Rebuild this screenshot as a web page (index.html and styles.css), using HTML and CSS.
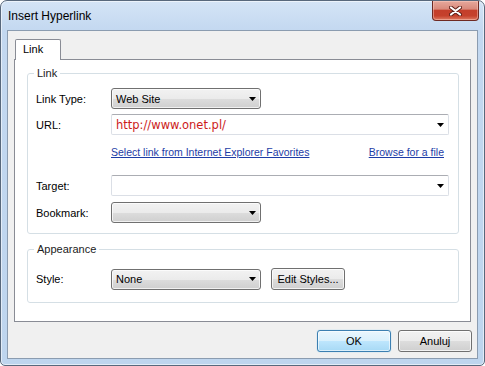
FILE: index.html
```html
<!DOCTYPE html>
<html lang="en">
<head>
    <meta charset="UTF-8">
    <title>Insert Hyperlink</title>
    <link rel="stylesheet" href="styles.css">
</head>
<body>
    <div class="window">
        <div class="titlebar">
            <span class="title">Insert Hyperlink</span>
            <button type="button" class="close" aria-label="Close">
                <svg width="13" height="10" viewBox="0 0 13 10">
                    <path d="M2 1.5 L11 8.5 M11 1.5 L2 8.5" stroke="#5e1f18" stroke-width="4" stroke-linecap="round"/>
                    <path d="M2 1.5 L11 8.5 M11 1.5 L2 8.5" stroke="#fff" stroke-width="2.2" stroke-linecap="round"/>
                </svg>
            </button>
        </div>
        <div class="client">
            <div class="tabs">
                <div class="tab active">Link</div>
            </div>
            <div class="tab-panel">
                <fieldset class="group group-link">
                    <legend>Link</legend>
                    <div class="row">
                        <label>Link Type:</label>
                        <div class="combo list short">
                            <span>Web Site</span>
                            <svg class="arrow" width="7" height="4" viewBox="0 0 7 4"><path d="M0 0h7L3.5 4z"/></svg>
                        </div>
                    </div>
                    <div class="row row-url">
                        <label>URL:</label>
                        <div class="combo edit wide">
                            <span class="url">http://www.onet.pl/</span>
                            <svg class="arrow" width="7" height="4" viewBox="0 0 7 4"><path d="M0 0h7L3.5 4z"/></svg>
                        </div>
                    </div>
                    <div class="links">
                        <a href="#">Select link from Internet Explorer Favorites</a>
                        <a href="#" class="browse">Browse for a file</a>
                    </div>
                    <div class="row row-target">
                        <label>Target:</label>
                        <div class="combo edit wide">
                            <span></span>
                            <svg class="arrow" width="7" height="4" viewBox="0 0 7 4"><path d="M0 0h7L3.5 4z"/></svg>
                        </div>
                    </div>
                    <div class="row row-bookmark">
                        <label>Bookmark:</label>
                        <div class="combo list short">
                            <span></span>
                            <svg class="arrow" width="7" height="4" viewBox="0 0 7 4"><path d="M0 0h7L3.5 4z"/></svg>
                        </div>
                    </div>
                </fieldset>
                <fieldset class="group group-appearance">
                    <legend>Appearance</legend>
                    <div class="row row-style">
                        <label>Style:</label>
                        <div class="combo list short">
                            <span>None</span>
                            <svg class="arrow" width="7" height="4" viewBox="0 0 7 4"><path d="M0 0h7L3.5 4z"/></svg>
                        </div>
                        <button type="button" class="btn edit-styles">Edit Styles...</button>
                    </div>
                </fieldset>
            </div>
            <div class="footer">
                <button type="button" class="btn default">OK</button>
                <button type="button" class="btn">Anuluj</button>
            </div>
        </div>
    </div>
</body>
</html>
```

FILE: styles.css
```css
body {
    margin: 0;
    background: #fff;
    font-family: "Liberation Sans", Arial, sans-serif;
    font-size: 11px;
    color: #000;
}
.window {
    width: 485px;
    height: 366px;
    box-sizing: border-box;
    border: 1px solid #58687c;
    border-radius: 7px 7px 5px 5px;
    padding: 0 6px 6px;
    background: linear-gradient(180deg, #d4e4f6 0%, #c3d8f0 30px, #bed5ee 100%);
    box-shadow: inset 0 0 0 1px rgba(255, 255, 255, 0.55);
    display: flex;
    flex-direction: column;
    overflow: hidden;
}
.titlebar {
    display: flex;
    align-items: center;
    height: 29px;
    margin: 0 -6px;
    padding: 0 5px 0 7px;
}
.title {
    font-size: 12px;
    color: #000;
}
.close {
    margin-left: auto;
    align-self: flex-start;
    width: 47px;
    height: 20px;
    padding: 0;
    border: 1px solid #6e2a23;
    border-top: none;
    border-radius: 0 0 4px 4px;
    background: linear-gradient(180deg, #e6a89c 0%, #d98a7c 42%, #c43f2b 50%, #c5412c 78%, #de7a62 100%);
    box-shadow: inset 0 0 0 1px rgba(255, 210, 200, 0.45);
    display: flex;
    align-items: center;
    justify-content: center;
}
.client {
    flex: 1;
    display: flex;
    flex-direction: column;
    background: #f0f0f0;
    border: 1px solid #8b9cb0;
    padding: 8px 6px 0;
}
.tabs {
    display: flex;
    height: 20px;
    padding-left: 1px;
}
.tab {
    box-sizing: border-box;
    width: 46px;
    height: 21px;
    padding: 3px 0 0 7px;
    border: 1px solid #898c95;
    border-bottom: none;
    border-radius: 2px 2px 0 0;
    background: #fff;
    line-height: 13px;
    position: relative;
    z-index: 1;
}
.tab-panel {
    box-sizing: border-box;
    height: 263px;
    border: 1px solid #898c95;
    background: #fff;
    padding-top: 7px;
}
.group {
    margin: 0 11px 0 12px;
    padding: 8px 9px 10px 8px;
    border: 1px solid #d5dfe5;
    border-radius: 3px;
    min-width: 0;
}
.group legend {
    padding: 0 3px;
    margin-left: -2px;
    line-height: 13px;
    color: #1b1b1b;
}
.group-appearance {
    margin-top: 9px;
    padding: 12px 9px 12px 8px;
}
.row {
    display: flex;
    align-items: center;
}
.row label {
    width: 75px;
    flex-shrink: 0;
}
.row-url {
    margin-top: 5px;
}
.row-target {
    margin-top: 16px;
}
.row-bookmark {
    margin-top: 6px;
}
.row-style {
    height: 22px;
}
.combo {
    box-sizing: border-box;
    height: 21px;
    display: flex;
    align-items: center;
    padding: 0 4px;
}
.combo span {
    flex: 1;
}
.combo.list {
    border: 1px solid #707070;
    border-radius: 3px;
    background: linear-gradient(180deg, #f2f2f2 0%, #ebebeb 50%, #dddddd 50%, #cfcfcf 100%);
    box-shadow: inset 0 0 0 1px rgba(255, 255, 255, 0.7);
}
.combo.edit {
    background: #fff;
    border: 1px solid #dbdfe6;
    border-top-color: #abadb3;
    border-radius: 2px;
}
.short {
    width: 150px;
}
.wide {
    flex: 1;
}
.url {
    font-family: "DejaVu Sans", Tahoma, sans-serif;
    font-size: 11.5px;
    color: #cc1b1b;
}
.arrow {
    fill: #000;
    flex-shrink: 0;
}
.links {
    display: flex;
    height: 13px;
    line-height: 13px;
    margin-top: 11px;
    padding: 0 5px 0 75px;
    font-size: 10.5px;
}
.links a {
    color: #1d3ca6;
}
.links .browse {
    margin-left: auto;
}
.btn {
    box-sizing: border-box;
    width: 74px;
    height: 22px;
    padding: 0;
    font-family: "Liberation Sans", Arial, sans-serif;
    font-size: 11px;
    color: #000;
    border: 1px solid #707070;
    border-radius: 3px;
    background: linear-gradient(180deg, #f2f2f2 0%, #ebebeb 50%, #dddddd 50%, #cfcfcf 100%);
    box-shadow: inset 0 0 0 1px rgba(255, 255, 255, 0.75);
}
.btn.default {
    border-color: #3c7fb1;
    background: linear-gradient(180deg, #eaf6fd 0%, #d9f0fc 50%, #bee6fd 50%, #a7d9f5 100%);
    box-shadow: inset 0 0 0 1px rgba(255, 255, 255, 0.6), 0 0 1px #6bc3f0;
}
.edit-styles {
    margin-left: 10px;
}
.footer {
    display: flex;
    justify-content: flex-end;
    gap: 7px;
    padding-top: 8px;
    margin-right: -1px;
}
```
